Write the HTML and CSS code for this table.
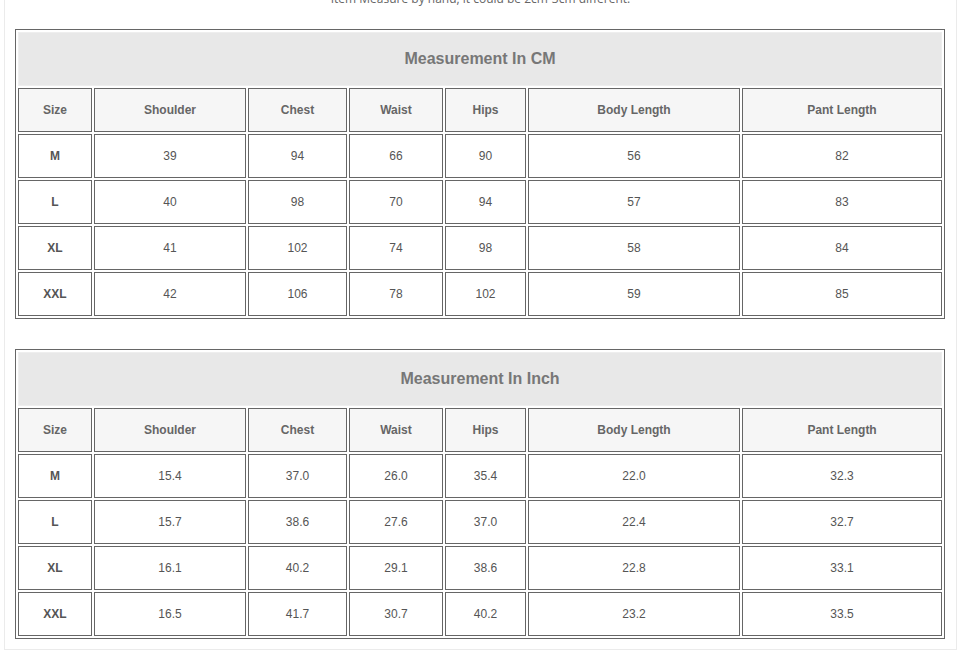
FILE: index.html
```html
<!DOCTYPE html>
<html>
<head>
<meta charset="utf-8">
<link rel="stylesheet" href="styles.css">
</head>
<body>
<div class="wrap">
  <p class="note">Item Measure by hand, it could be 2cm-3cm different.</p>
  <table class="size-table">
    <colgroup>
      <col class="c-size"><col class="c-shoulder"><col class="c-chest"><col class="c-waist"><col class="c-hips"><col class="c-body"><col class="c-pant">
    </colgroup>
    <tr><td class="title" colspan="7">Measurement In CM</td></tr>
    <tr class="head"><td>Size</td><td>Shoulder</td><td>Chest</td><td>Waist</td><td>Hips</td><td>Body Length</td><td>Pant Length</td></tr>
    <tr><td class="sz">M</td><td>39</td><td>94</td><td>66</td><td>90</td><td>56</td><td>82</td></tr>
    <tr><td class="sz">L</td><td>40</td><td>98</td><td>70</td><td>94</td><td>57</td><td>83</td></tr>
    <tr><td class="sz">XL</td><td>41</td><td>102</td><td>74</td><td>98</td><td>58</td><td>84</td></tr>
    <tr><td class="sz">XXL</td><td>42</td><td>106</td><td>78</td><td>102</td><td>59</td><td>85</td></tr>
  </table>
  <table class="size-table second">
    <colgroup>
      <col class="c-size"><col class="c-shoulder"><col class="c-chest"><col class="c-waist"><col class="c-hips"><col class="c-body"><col class="c-pant">
    </colgroup>
    <tr><td class="title" colspan="7">Measurement In Inch</td></tr>
    <tr class="head"><td>Size</td><td>Shoulder</td><td>Chest</td><td>Waist</td><td>Hips</td><td>Body Length</td><td>Pant Length</td></tr>
    <tr><td class="sz">M</td><td>15.4</td><td>37.0</td><td>26.0</td><td>35.4</td><td>22.0</td><td>32.3</td></tr>
    <tr><td class="sz">L</td><td>15.7</td><td>38.6</td><td>27.6</td><td>37.0</td><td>22.4</td><td>32.7</td></tr>
    <tr><td class="sz">XL</td><td>16.1</td><td>40.2</td><td>29.1</td><td>38.6</td><td>22.8</td><td>33.1</td></tr>
    <tr><td class="sz">XXL</td><td>16.5</td><td>41.7</td><td>30.7</td><td>40.2</td><td>23.2</td><td>33.5</td></tr>
  </table>
</div>
</body>
</html>
```
FILE: styles.css
```css
html, body {
  margin: 0;
  padding: 0;
  background: #fff;
  overflow: hidden;
}
body {
  font-family: "Liberation Sans", Arial, sans-serif;
}
.wrap {
  margin-left: 4px;
  width: 931px;
  padding: 0 10px 10px 10px;
  border: 1px solid #ebebeb;
  border-top: none;
}
.note {
  margin: -8px 0 0 0;
  line-height: 14px;
  font-family: "Open Sans", "Liberation Sans", sans-serif;
  font-size: 12px;
  color: #666;
  text-align: center;
}
.size-table {
  margin-top: 23px;
  width: 930px;
  table-layout: fixed;
  border-collapse: separate;
  border-spacing: 2px;
  border: 1px solid #666;
}
.size-table.second {
  margin-top: 30px;
}
.c-size { width: 74px; }
.c-shoulder { width: 152px; }
.c-chest { width: 99px; }
.c-waist { width: 94px; }
.c-hips { width: 81px; }
.c-body { width: 212px; }
.c-pant { width: 200px; }
.size-table td {
  box-sizing: border-box;
  border: 1px solid #666;
  height: 44px;
  padding: 0;
  text-align: center;
  vertical-align: middle;
  font-size: 12px;
  color: #555;
  background: #fff;
}
.size-table td.title {
  height: 54px;
  border: 1px solid #eeeeee;
  background: #e8e8e8;
  font-size: 16px;
  font-weight: bold;
  color: #777;
}
.size-table tr.head td {
  background: #f6f6f6;
  font-weight: bold;
  color: #666;
}
.size-table td.sz {
  font-weight: bold;
  color: #555;
}
```
